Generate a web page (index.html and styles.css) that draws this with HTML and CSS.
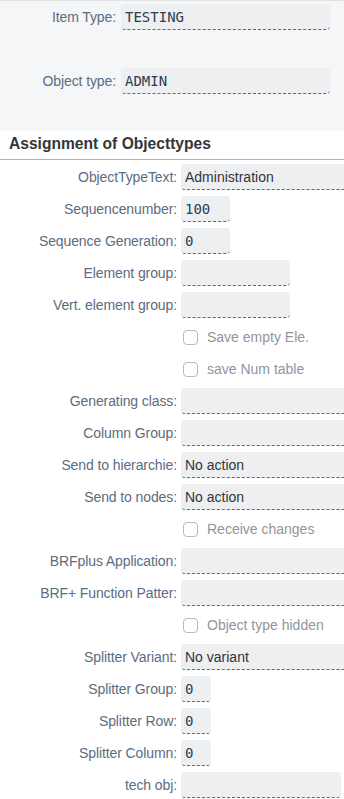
FILE: index.html
```html
<!DOCTYPE html>
<html lang="en">
<head>
    <meta charset="UTF-8">
    <meta name="viewport" content="width=device-width, initial-scale=1.0">
    <title>Assignment of Objecttypes</title>
    <link rel="stylesheet" href="styles.css">
</head>
<body>

    <!-- Header fields -->
    <div class="top">
        <div class="top-row">
            <span class="label">Item Type:</span>
            <div class="field mono top-field">TESTING</div>
        </div>
        <div class="top-row">
            <span class="label">Object type:</span>
            <div class="field mono top-field">ADMIN</div>
        </div>
    </div>

    <div class="section-title">Assignment of Objecttypes</div>

    <!-- Assignment form -->
    <div class="form">
        <div class="row"><span class="label">ObjectTypeText:</span><div class="field wide">Administration</div></div>
        <div class="row"><span class="label">Sequencenumber:</span><div class="field mono small">100</div></div>
        <div class="row"><span class="label">Sequence Generation:</span><div class="field mono small">0</div></div>
        <div class="row"><span class="label">Element group:</span><div class="field medium"></div></div>
        <div class="row"><span class="label">Vert. element group:</span><div class="field medium"></div></div>
        <div class="row"><span></span><label class="check"><span class="box"></span>Save empty Ele.</label></div>
        <div class="row"><span></span><label class="check"><span class="box"></span>save Num table</label></div>
        <div class="row"><span class="label">Generating class:</span><div class="field wide"></div></div>
        <div class="row"><span class="label">Column Group:</span><div class="field wide"></div></div>
        <div class="row"><span class="label">Send to hierarchie:</span><div class="field wide">No action</div></div>
        <div class="row"><span class="label">Send to nodes:</span><div class="field wide">No action</div></div>
        <div class="row"><span></span><label class="check"><span class="box"></span>Receive changes</label></div>
        <div class="row"><span class="label">BRFplus Application:</span><div class="field wide"></div></div>
        <div class="row"><span class="label">BRF+ Function Patter:</span><div class="field wide"></div></div>
        <div class="row"><span></span><label class="check"><span class="box"></span>Object type hidden</label></div>
        <div class="row"><span class="label">Splitter Variant:</span><div class="field wide">No variant</div></div>
        <div class="row"><span class="label">Splitter Group:</span><div class="field mono tiny">0</div></div>
        <div class="row"><span class="label">Splitter Row:</span><div class="field mono tiny">0</div></div>
        <div class="row"><span class="label">Splitter Column:</span><div class="field mono tiny">0</div></div>
        <div class="row"><span class="label">tech obj:</span><div class="field tech"></div></div>
    </div>

</body>
</html>
```

FILE: styles.css
```css
* {
    margin: 0;
    padding: 0;
    box-sizing: border-box;
    font-family: "Liberation Sans", Arial, sans-serif;
}

body {
    width: 344px;
    overflow: hidden;
    background: #ffffff;
    color: #32363a;
    font-size: 14px;
    border-top: 1px solid #e1e3e5;
}

.label {
    color: #5b6d80;
    text-align: right;
    white-space: nowrap;
    letter-spacing: -0.1px;
}

.field {
    height: 26px;
    line-height: 27px;
    padding-left: 4px;
    background: #eeeff0;
    border-radius: 4px;
    border-bottom: 1px dashed #556b82;
    white-space: nowrap;
    overflow: hidden;
}

.mono {
    font-family: "DejaVu Sans Mono", monospace;
    font-size: 14px;
    color: #2c3e50;
}

/* top block */
.top {
    background: #f5f6f7;
    padding: 3px 0 37px;
    display: flex;
    flex-direction: column;
    gap: 38px;
}

.top-row {
    display: grid;
    grid-template-columns: 116px 209px;
    column-gap: 5px;
    align-items: center;
}

.section-title {
    height: 29px;
    padding: 4px 0 0 9px;
    font-size: 15.6px;
    font-weight: bold;
    color: #32363a;
    background: #ffffff;
    border-bottom: 1px solid #a9b4be;
}

/* form */
.form {
    padding-top: 4px;
    display: flex;
    flex-direction: column;
    gap: 6px;
}

.row {
    display: grid;
    grid-template-columns: 177px auto;
    column-gap: 4px;
    align-items: center;
    height: 26px;
}

.wide {
    width: 163px;
    border-radius: 4px 0 0 4px;
}
.medium { width: 109px; }
.small { width: 49px; }
.tiny { width: 30px; }
.tech { width: 160px; }

.check {
    display: flex;
    align-items: center;
    gap: 9px;
    padding-left: 2px;
    color: #8f969c;
}

.box {
    width: 15px;
    height: 15px;
    border: 1px solid #b6bbc0;
    border-radius: 4px;
    background: #ffffff;
}
```
